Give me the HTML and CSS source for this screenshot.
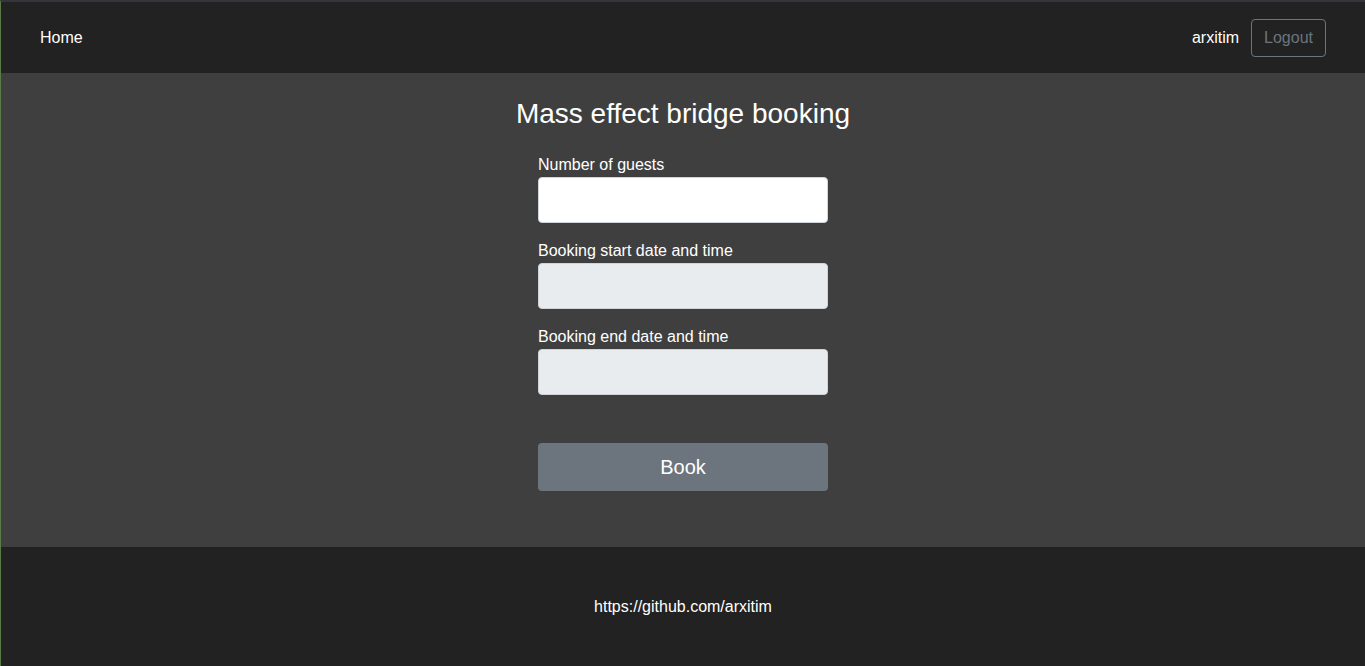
FILE: index.html
```html
<!DOCTYPE html>
<html lang="en">
<head>
<meta charset="utf-8">
<title>Mass effect bridge booking</title>
<link rel="stylesheet" href="styles.css">
</head>
<body>
<div class="page">
  <nav class="navbar">
    <a class="nav-home" href="#">Home</a>
    <div class="nav-right">
      <span class="user">arxitim</span>
      <button class="btn-logout" type="button">Logout</button>
    </div>
  </nav>
  <main class="main">
    <h1 class="title">Mass effect bridge booking</h1>
    <form class="form">
      <div class="field">
        <label class="label">Number of guests</label>
        <input class="input" type="text">
      </div>
      <div class="field">
        <label class="label">Booking start date and time</label>
        <input class="input input-disabled" type="text" disabled>
      </div>
      <div class="field">
        <label class="label">Booking end date and time</label>
        <input class="input input-disabled" type="text" disabled>
      </div>
      <button class="btn-book" type="button">Book</button>
    </form>
  </main>
  <footer class="footer">
    <span class="footer-link">https://github.com/arxitim</span>
  </footer>
</div>
</body>
</html>
```

FILE: styles.css
```css
* { box-sizing: border-box; }
html, body { margin: 0; padding: 0; }
body {
  font-family: "Liberation Sans", Arial, sans-serif;
  font-size: 16px;
  line-height: 24px;
  color: #fff;
  background: #222;
  border-top: 2px solid #33363a;
  border-left: 1px solid #5c7a48;
  height: 666px;
  overflow: hidden;
}
.page { display: flex; flex-direction: column; height: 664px; }
.navbar {
  height: 71px;
  background: #222;
  display: flex;
  align-items: center;
  justify-content: space-between;
  padding: 0 39px 0 39px;
}
.nav-home { color: #fff; text-decoration: none; }
.nav-right { display: flex; align-items: center; gap: 12px; }
.user { color: #fff; }
.btn-logout {
  font: inherit;
  font-family: "Liberation Sans", Arial, sans-serif;
  font-size: 16px;
  line-height: 24px;
  color: #6c757d;
  background: transparent;
  border: 1px solid #6c757d;
  border-radius: 4px;
  padding: 6px 12px;
  height: 38px;
}
.main {
  height: 474px;
  background: #3f3f3f;
  display: flex;
  flex-direction: column;
  align-items: center;
  padding-top: 24px;
}
.title {
  margin: 0 0 22px;
  font-size: 28px;
  line-height: 34px;
  font-weight: 400;
}
.form { width: 290px; display: flex; flex-direction: column; }
.field { display: flex; flex-direction: column; margin-bottom: 16px; }
.label { font-size: 16px; line-height: 24px; color: #fff; }
.input {
  height: 46px;
  border: 1px solid #ced4da;
  border-radius: 4px;
  background: #fff;
  font: inherit;
  padding: 6px 12px;
}
.input-disabled { background: #e9ecef; }
.btn-book {
  margin-top: 32px;
  height: 48px;
  border: none;
  border-radius: 4px;
  background: #6c757d;
  color: #fff;
  font-family: "Liberation Sans", Arial, sans-serif;
  font-size: 20px;
  line-height: 30px;
}
.footer {
  flex: 1;
  background: #222;
  display: flex;
  justify-content: center;
  padding-top: 48px;
}
.footer-link { color: #fff; }
```
